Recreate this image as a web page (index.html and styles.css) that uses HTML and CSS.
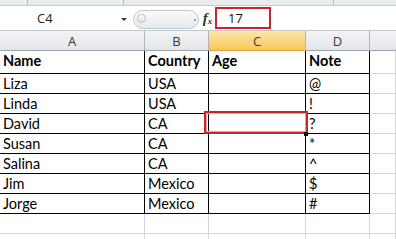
FILE: index.html
```html
<!DOCTYPE html>
<html>
<head>
<meta charset="utf-8">
<link rel="stylesheet" href="styles.css">
</head>
<body>
<div class="app">
  <div class="ribbon">
    <span class="rsep s1"></span>
    <span class="rsep s2"></span>
    <span class="rsep s3"></span>
  </div>
  <div class="fbar">
    <div class="namebox"><span class="ref">C4</span><span class="arrow"></span></div>
    <div class="capsule"><span class="ring"></span><span class="grip"></span></div>
    <div class="fx"><span class="f">f</span><span class="x">x</span></div>
    <div class="input"><div class="redbox">17</div></div>
  </div>
  <div class="sheet">
    <div class="hd">A</div><div class="hd">B</div><div class="hd sel">C</div><div class="hd">D</div><div class="hd last"></div>

    <div class="c t first b">Name</div><div class="c t first b">Country</div><div class="c t first b">Age</div><div class="c t first b">Note</div><div class="c g first"></div>

    <div class="c t">Liza</div><div class="c t">USA</div><div class="c t"></div><div class="c t">@</div><div class="c g"></div>
    <div class="c t">Linda</div><div class="c t">USA</div><div class="c t"></div><div class="c t">!</div><div class="c g"></div>
    <div class="c t">David</div><div class="c t">CA</div><div class="c t active"><span class="handle"></span></div><div class="c t">?</div><div class="c g"></div>
    <div class="c t">Susan</div><div class="c t">CA</div><div class="c t"></div><div class="c t">*</div><div class="c g"></div>
    <div class="c t">Salina</div><div class="c t">CA</div><div class="c t"></div><div class="c t">^</div><div class="c g"></div>
    <div class="c t">Jim</div><div class="c t">Mexico</div><div class="c t"></div><div class="c t">$</div><div class="c g"></div>
    <div class="c t">Jorge</div><div class="c t">Mexico</div><div class="c t"></div><div class="c t">#</div><div class="c g"></div>

    <div class="c g"></div><div class="c g"></div><div class="c g"></div><div class="c g"></div><div class="c g"></div>
    <div class="c g"></div><div class="c g"></div><div class="c g"></div><div class="c g"></div><div class="c g"></div>
  </div>
</div>
</body>
</html>
```
FILE: styles.css
```css
html, body {
  margin: 0;
  padding: 0;
  background: #ffffff;
  overflow: hidden;
}
.app {
  width: 396px;
  height: 239px;
  overflow: hidden;
  font-family: Lato, "Liberation Sans", sans-serif;
}
.ribbon {
  height: 5px;
  background: #e9ecef;
  border-bottom: 1px solid #c6cbd1;
  position: relative;
}
.rsep {
  position: absolute;
  top: 0;
  width: 1px;
  height: 5px;
  background: #b4bac2;
}
.s1 { left: 27px; }
.s2 { left: 123px; }
.s3 { left: 333px; }

.fbar {
  height: 24px;
  border-bottom: 1px solid #c3c8ce;
  display: flex;
  align-items: stretch;
  background: #ffffff;
}
.namebox {
  width: 131px;
  display: flex;
  align-items: center;
  position: relative;
  background: #ffffff;
}
.ref {
  margin-left: 37px;
  font-family: "Open Sans", sans-serif;
  font-size: 13px;
  color: #222;
}
.arrow {
  position: absolute;
  left: 121px;
  top: 12px;
  width: 0;
  height: 0;
  border-left: 3px solid transparent;
  border-right: 3px solid transparent;
  border-top: 3px solid #333;
}
.capsule {
  margin: 4px 0 1px 2px;
  width: 64px;
  border: 1px solid #c2c7ce;
  border-radius: 10px;
  background: linear-gradient(#f8f9fa, #e6e9ed);
  position: relative;
}
.ring {
  position: absolute;
  left: 3px;
  top: 3px;
  width: 7px;
  height: 7px;
  border-radius: 50%;
  border: 1px solid #b9bec6;
  background: linear-gradient(#ffffff, #dfe2e6);
}
.grip {
  position: absolute;
  right: 2px;
  top: 8px;
  width: 2px;
  height: 2px;
  background: #9aa0a8;
}
.fx {
  width: 15px;
  display: flex;
  align-items: center;
  justify-content: center;
  font-family: "Liberation Serif", serif;
  font-style: italic;
  color: #333;
  padding-left: 1px;
}
.fx .f { font-size: 15px; font-weight: bold; }
.fx .x { font-size: 9px; margin-top: 5px; font-weight: bold; }
.input {
  flex: 1;
  padding-top: 1px;
}
.redbox {
  width: 52px;
  height: 18px;
  border: 2px solid #c8262c;
  box-sizing: content-box;
  font-family: "Open Sans", sans-serif;
  font-size: 13px;
  line-height: 18px;
  color: #111;
  padding-left: 11px;
  box-sizing: border-box;
  width: 56px;
  height: 22px;
}

.sheet {
  display: grid;
  grid-template-columns: 145px 64px 97px 64px 1fr;
  grid-template-rows: 20px 23px repeat(9, 20px);
}
.hd {
  background: linear-gradient(#f3f4f6, #e2e5e9);
  border-right: 1px solid #aeb3ba;
  border-bottom: 1px solid #9ea4ac;
  color: #3a3a3a;
  font-family: "Open Sans", sans-serif;
  font-size: 13px;
  display: flex;
  align-items: center;
  justify-content: center;
  box-sizing: border-box;
}
.hd.sel {
  background: linear-gradient(#fde7a6, #f6c75b);
  border-bottom-color: #e0a53c;
}
.hd.last { border-right: none; }
.c {
  box-sizing: border-box;
  font-size: 14.5px;
  color: #000;
  padding-left: 3px;
  line-height: 19px;
  white-space: nowrap;
  position: relative;
}
.c.t {
  border-right: 1px solid #000;
  border-bottom: 1px solid #000;
}
.c.first { line-height: 20px; }
.c.b { font-weight: bold; }
.c.g {
  border-right: 1px solid #d6d6d6;
  border-bottom: 1px solid #d6d6d6;
}
.active::after {
  content: "";
  position: absolute;
  left: -5px;
  top: -3px;
  right: -3px;
  bottom: -1px;
  border: 2px solid #c1272d;
  box-shadow: inset 0 0 0 1px #e7a3a6;
}
.handle {
  position: absolute;
  right: -3px;
  bottom: -3px;
  width: 4px;
  height: 4px;
  background: #111;
  z-index: 2;
}
```
